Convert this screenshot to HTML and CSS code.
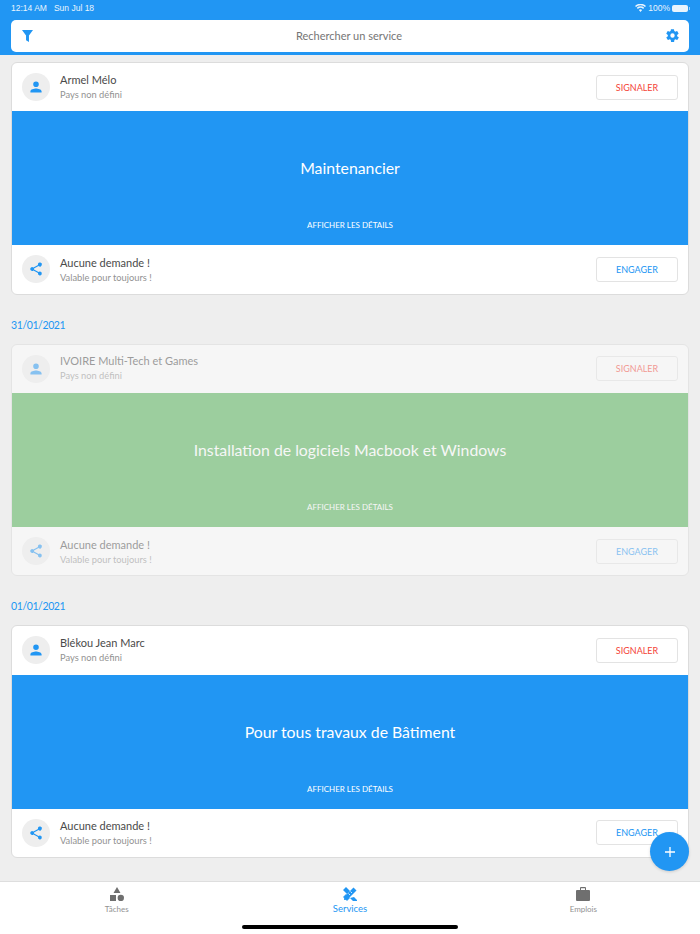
FILE: index.html
```html
<!DOCTYPE html>
<html lang="fr">
<head>
<meta charset="utf-8">
<title>Services</title>
<link rel="stylesheet" href="styles.css">
</head>
<body>
<div class="app">
  <header class="top">
    <div class="status">
      <div class="status-left"><span>12:14 AM</span><span>Sun Jul 18</span></div>
      <div class="status-right">
        <svg class="wifi" viewBox="0 0 14 10" width="11" height="8"><path d="M7 10 4.9 7.6a3 3 0 0 1 4.2 0zM3.6 6.2 2.3 4.8a6.8 6.8 0 0 1 9.4 0l-1.3 1.4a4.9 4.9 0 0 0-6.8 0zM1.3 3.7 0 2.4a10 10 0 0 1 14 0l-1.3 1.3a8.2 8.2 0 0 0-11.4 0z" fill="#fff"/></svg>
        <span>100%</span>
        <span class="battery"></span>
      </div>
    </div>
    <div class="search">
      <svg class="filter" viewBox="0 0 12 13" width="11" height="12"><path d="M0 0h12L7.6 6v7L4.4 11V6z" fill="#2196f3"/></svg>
      <span class="search-text">Rechercher un service</span>
      <svg viewBox="0 0 24 24" width="15" height="15" class="gear"><path d="M19.4 13a7.5 7.5 0 0 0 0-2l2.2-1.7a.5.5 0 0 0 .1-.7l-2-3.5a.5.5 0 0 0-.6-.2l-2.6 1a7.6 7.6 0 0 0-1.7-1l-.4-2.7a.5.5 0 0 0-.5-.4h-4a.5.5 0 0 0-.5.4l-.4 2.7a7.6 7.6 0 0 0-1.7 1l-2.6-1a.5.5 0 0 0-.6.2l-2 3.5a.5.5 0 0 0 .1.7L4.6 11a7.5 7.5 0 0 0 0 2l-2.2 1.7a.5.5 0 0 0-.1.7l2 3.5c.1.2.4.3.6.2l2.6-1c.5.4 1.1.7 1.7 1l.4 2.7c0 .2.3.4.5.4h4c.2 0 .5-.2.5-.4l.4-2.7c.6-.3 1.2-.6 1.7-1l2.6 1c.2.1.5 0 .6-.2l2-3.5a.5.5 0 0 0-.1-.7zM12 15.5a3.5 3.5 0 1 1 0-7 3.5 3.5 0 0 1 0 7z" fill="#2196f3"/></svg>
    </div>
  </header>

  <main class="feed">
    <article class="card">
      <div class="row">
        <span class="avatar"><svg viewBox="0 0 24 24" width="24" height="24"><path d="M12 12a4 4 0 1 0 0-8 4 4 0 0 0 0 8zm0 2c-2.7 0-8 1.3-8 4v2h16v-2c0-2.7-5.3-4-8-4z" fill="#2196f3"/></svg></span>
        <div class="info"><div class="title">Armel Mélo</div><div class="sub">Pays non défini</div></div>
        <span class="btn btn-red">SIGNALER</span>
      </div>
      <div class="banner"><div class="banner-title">Maintenancier</div><div class="banner-link">AFFICHER LES DÉTAILS</div></div>
      <div class="row row-bottom">
        <span class="avatar"><svg viewBox="0 0 24 24" width="22" height="22"><path d="M18 16a3 3 0 0 0-2 .8L8.9 12.7a3 3 0 0 0 0-1.4L16 7.2A3 3 0 1 0 15 5c0 .2 0 .5.1.7L8 9.8a3 3 0 1 0 0 4.4l7.1 4.1a3 3 0 1 0 2.9-2.3z" fill="#2196f3"/></svg></span>
        <div class="info"><div class="title">Aucune demande !</div><div class="sub">Valable pour toujours !</div></div>
        <span class="btn btn-blue">ENGAGER</span>
      </div>
    </article>

    <h2 class="date">31/01/2021</h2>

    <article class="card card-dim">
      <div class="row">
        <span class="avatar"><svg viewBox="0 0 24 24" width="24" height="24"><path d="M12 12a4 4 0 1 0 0-8 4 4 0 0 0 0 8zm0 2c-2.7 0-8 1.3-8 4v2h16v-2c0-2.7-5.3-4-8-4z" fill="#2196f3"/></svg></span>
        <div class="info"><div class="title">IVOIRE Multi-Tech et Games</div><div class="sub">Pays non défini</div></div>
        <span class="btn btn-red">SIGNALER</span>
      </div>
      <div class="banner banner-green"><div class="banner-title">Installation de logiciels Macbook et Windows</div><div class="banner-link">AFFICHER LES DÉTAILS</div></div>
      <div class="row row-bottom">
        <span class="avatar"><svg viewBox="0 0 24 24" width="22" height="22"><path d="M18 16a3 3 0 0 0-2 .8L8.9 12.7a3 3 0 0 0 0-1.4L16 7.2A3 3 0 1 0 15 5c0 .2 0 .5.1.7L8 9.8a3 3 0 1 0 0 4.4l7.1 4.1a3 3 0 1 0 2.9-2.3z" fill="#2196f3"/></svg></span>
        <div class="info"><div class="title">Aucune demande !</div><div class="sub">Valable pour toujours !</div></div>
        <span class="btn btn-blue">ENGAGER</span>
      </div>
    </article>

    <h2 class="date">01/01/2021</h2>

    <article class="card">
      <div class="row">
        <span class="avatar"><svg viewBox="0 0 24 24" width="24" height="24"><path d="M12 12a4 4 0 1 0 0-8 4 4 0 0 0 0 8zm0 2c-2.7 0-8 1.3-8 4v2h16v-2c0-2.7-5.3-4-8-4z" fill="#2196f3"/></svg></span>
        <div class="info"><div class="title">Blékou Jean Marc</div><div class="sub">Pays non défini</div></div>
        <span class="btn btn-red">SIGNALER</span>
      </div>
      <div class="banner"><div class="banner-title">Pour tous travaux de Bâtiment</div><div class="banner-link">AFFICHER LES DÉTAILS</div></div>
      <div class="row row-bottom">
        <span class="avatar"><svg viewBox="0 0 24 24" width="22" height="22"><path d="M18 16a3 3 0 0 0-2 .8L8.9 12.7a3 3 0 0 0 0-1.4L16 7.2A3 3 0 1 0 15 5c0 .2 0 .5.1.7L8 9.8a3 3 0 1 0 0 4.4l7.1 4.1a3 3 0 1 0 2.9-2.3z" fill="#2196f3"/></svg></span>
        <div class="info"><div class="title">Aucune demande !</div><div class="sub">Valable pour toujours !</div></div>
        <span class="btn btn-blue">ENGAGER</span>
      </div>
    </article>
  </main>

  <span class="fab"><svg viewBox="0 0 12 12" width="12" height="12"><path d="M6 1v10M1 6h10" stroke="#fff" stroke-width="1.3" fill="none"/></svg></span>

  <nav class="tabs">
    <div class="tab">
      <svg viewBox="0 0 14 14" width="14" height="14"><path d="M7 0 10.5 6h-7zM0 8h6v6H0z" fill="#6f6f6f"/><circle cx="10.8" cy="11" r="3.2" fill="#6f6f6f"/></svg>
      <span>Tâches</span>
    </div>
    <div class="tab tab-active">
      <svg viewBox="0 0 14 14" width="14" height="14"><g fill="#2196f3"><path d="M0 3 3 0l4 4-3 3zM10 14l-3-3 4-1 3 3v1z"/><path d="M3 7 7 11 4 14 0 10z" opacity=".9"/><path d="M1.5 9.5 10.5.5 13.5 3.5 4.5 12.5 1 13z"/></g><path d="M5.5 6.5 7 8M7.5 4.5 9 6" stroke="#fff" stroke-width=".8"/></svg>
      <span>Services</span>
    </div>
    <div class="tab">
      <svg viewBox="0 0 14 14" width="14" height="14"><path d="M5 0h4a1 1 0 0 1 1 1v2h3a1 1 0 0 1 1 1v9a1 1 0 0 1-1 1H1a1 1 0 0 1-1-1V4a1 1 0 0 1 1-1h3V1a1 1 0 0 1 1-1zm0 1.2V3h4V1.2z" fill="#6f6f6f" fill-rule="evenodd"/></svg>
      <span>Emplois</span>
    </div>
    <span class="home-bar"></span>
  </nav>
</div>
</body>
</html>
```

FILE: styles.css
```css
* { box-sizing: border-box; }

html, body {
  margin: 0;
  padding: 0;
}

body {
  font-family: "Lato", "Noto Sans", sans-serif;
  color: #424242;
  background: #eeeeee;
}

.app {
  position: relative;
  width: 700px;
  height: 934px;
  overflow: hidden;
  display: flex;
  flex-direction: column;
}

.top {
  height: 55px;
  flex: none;
  background: #2196f3;
  padding: 0 11px;
}

.status {
  height: 16px;
  margin-bottom: 4px;
  display: flex;
  justify-content: space-between;
  align-items: center;
  color: #fff;
  font-family: "Liberation Sans", sans-serif;
  font-size: 8.5px;
  opacity: .9;
}

.status-left {
  display: flex;
  gap: 7px;
}

.status-right {
  display: flex;
  align-items: center;
  gap: 2px;
}

.battery {
  position: relative;
  display: block;
  width: 16px;
  height: 7px;
  margin-right: 1px;
  border-radius: 2px;
  background: #fff;
}

.battery::after {
  content: "";
  position: absolute;
  right: -2px;
  top: 2px;
  width: 1px;
  height: 3px;
  background: rgba(255, 255, 255, .6);
}

.search {
  height: 32px;
  background: #fff;
  border-radius: 5px;
  display: flex;
  align-items: center;
  justify-content: space-between;
  padding: 0 9px 0 11px;
}

.filter {
  margin-top: 0;
}

.gear {
  margin-top: -1px;
}

.search-text {
  margin-top: -2px;
  font-size: 11px;
  color: #757575;
}

.feed {
  flex: 1;
  padding: 7px 11px 0;
}

.card {
  height: 232.6px;
  background: #fff;
  border: 1px solid #dcdcdc;
  border-radius: 6px;
  overflow: hidden;
}

.card-dim {
  opacity: .5;
}

.row {
  height: 48.4px;
  display: flex;
  align-items: center;
  padding: 0 10px;
}

.row-bottom {
  height: 48.2px;
}

.avatar {
  width: 28px;
  height: 28px;
  flex: none;
  border-radius: 50%;
  background: #eeeeee;
  display: flex;
  align-items: center;
  justify-content: center;
}

.avatar svg {
  transform: scale(.7);
}

.info {
  flex: 1;
  margin-left: 10px;
  margin-top: -1px;
}

.row-bottom .info {
  margin-top: 1px;
}

.title {
  font-size: 11px;
  line-height: 14px;
  color: #4a4a4a;
}

.sub {
  font-size: 9.3px;
  line-height: 12px;
  margin-top: 2px;
  color: #929292;
}

.btn {
  width: 82px;
  height: 25px;
  flex: none;
  display: flex;
  align-items: center;
  justify-content: center;
  background: #fff;
  border: 1px solid #e3e3e3;
  border-radius: 3px;
  font-size: 9px;
}

.btn-red { color: #f44336; }
.btn-blue { color: #2196f3; }

.banner {
  height: 134px;
  background: #2196f3;
  color: #fff;
  display: flex;
  flex-direction: column;
  align-items: center;
}

.banner-green {
  background: #4caf50;
}

.banner-title {
  margin-top: 46px;
  font-size: 15.8px;
  line-height: 22px;
}

.banner-link {
  margin-top: 40px;
  font-size: 8px;
  line-height: 12px;
}

.date {
  height: 49px;
  margin: 0;
  padding-top: 11px;
  display: flex;
  align-items: center;
  font-size: 10.5px;
  letter-spacing: -.4px;
  font-weight: 400;
  color: #2196f3;
}

.fab {
  position: absolute;
  left: 650px;
  top: 832px;
  width: 39px;
  height: 39px;
  border-radius: 50%;
  background: #2196f3;
  display: flex;
  align-items: center;
  justify-content: center;
  box-shadow: 0 1px 3px rgba(0, 0, 0, .15);
}

.tabs {
  position: relative;
  height: 53px;
  flex: none;
  background: #fff;
  border-top: 1px solid #dedede;
  display: flex;
}

.tab {
  flex: 1;
  display: flex;
  flex-direction: column;
  align-items: center;
  padding-top: 5px;
  font-size: 8px;
  line-height: 10px;
  color: #929292;
  gap: 3px;
}

.tab-active {
  color: #2196f3;
  font-size: 9.5px;
}

.home-bar {
  position: absolute;
  left: 242px;
  top: 43px;
  width: 216px;
  height: 4px;
  border-radius: 2px;
  background: #000;
}
```
